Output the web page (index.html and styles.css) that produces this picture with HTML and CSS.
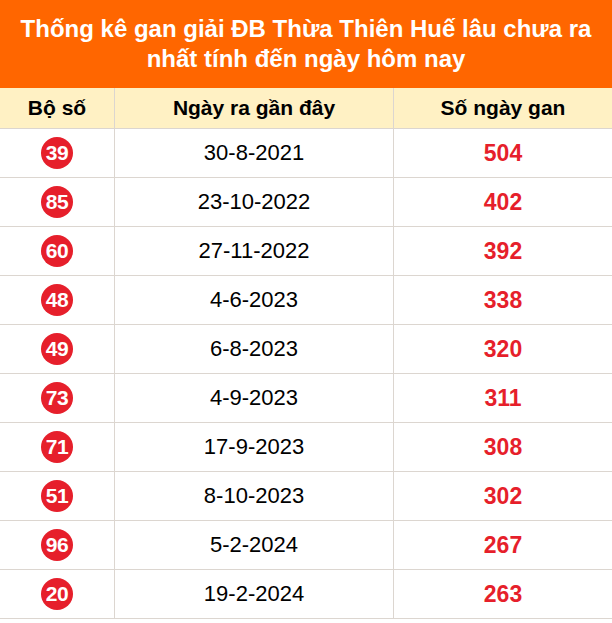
FILE: index.html
```html
<!DOCTYPE html>
<html lang="vi">
<head>
<meta charset="utf-8">
<title>Thống kê gan giải ĐB Thừa Thiên Huế</title>
<link rel="stylesheet" href="styles.css">
</head>
<body>
<div class="board">
  <div class="title">Thống kê gan giải ĐB Thừa Thiên Huế lâu chưa ra<br>nhất tính đến ngày hôm nay</div>
  <div class="grid">
    <div class="cell head">Bộ số</div>
    <div class="cell head">Ngày ra gần đây</div>
    <div class="cell head">Số ngày gan</div>

    <div class="cell"><span class="ball">39</span></div><div class="cell date">30-8-2021</div><div class="cell gan">504</div>
    <div class="cell"><span class="ball">85</span></div><div class="cell date">23-10-2022</div><div class="cell gan">402</div>
    <div class="cell"><span class="ball">60</span></div><div class="cell date">27-11-2022</div><div class="cell gan">392</div>
    <div class="cell"><span class="ball">48</span></div><div class="cell date">4-6-2023</div><div class="cell gan">338</div>
    <div class="cell"><span class="ball">49</span></div><div class="cell date">6-8-2023</div><div class="cell gan">320</div>
    <div class="cell"><span class="ball">73</span></div><div class="cell date">4-9-2023</div><div class="cell gan">311</div>
    <div class="cell"><span class="ball">71</span></div><div class="cell date">17-9-2023</div><div class="cell gan">308</div>
    <div class="cell"><span class="ball">51</span></div><div class="cell date">8-10-2023</div><div class="cell gan">302</div>
    <div class="cell"><span class="ball">96</span></div><div class="cell date">5-2-2024</div><div class="cell gan">267</div>
    <div class="cell"><span class="ball">20</span></div><div class="cell date">19-2-2024</div><div class="cell gan">263</div>
  </div>
</div>
</body>
</html>
```

FILE: styles.css
```css
* { box-sizing: border-box; }
html, body { margin: 0; padding: 0; background: #fff; }
body { font-family: "Liberation Sans", Arial, sans-serif; color: #000; }
.board { width: 612px; }
.title {
  background: #ff6600;
  color: #fff;
  font-weight: bold;
  font-size: 24px;
  line-height: 30px;
  text-align: center;
  height: 88px;
  padding-top: 14px;
}
.grid {
  display: grid;
  grid-template-columns: 114px 279px 219px;
}
.cell {
  height: 49px;
  border-bottom: 1px solid #dcd6d0;
  display: flex;
  align-items: center;
  justify-content: center;
  font-size: 22px;
}
.cell:nth-child(3n+2), .cell:nth-child(3n) { border-left: 1px solid #dcd6d0; }
.head {
  height: 41px;
  background: #fff1c4;
  font-weight: bold;
  font-size: 21px;
}
.ball {
  width: 32px;
  height: 32px;
  border-radius: 50%;
  background: #e61f2b;
  color: #fff;
  font-weight: bold;
  font-size: 21px;
  letter-spacing: -0.5px;
  display: flex;
  align-items: center;
  justify-content: center;
}
.gan { color: #e61f2b; font-weight: bold; font-size: 23px; }
```
